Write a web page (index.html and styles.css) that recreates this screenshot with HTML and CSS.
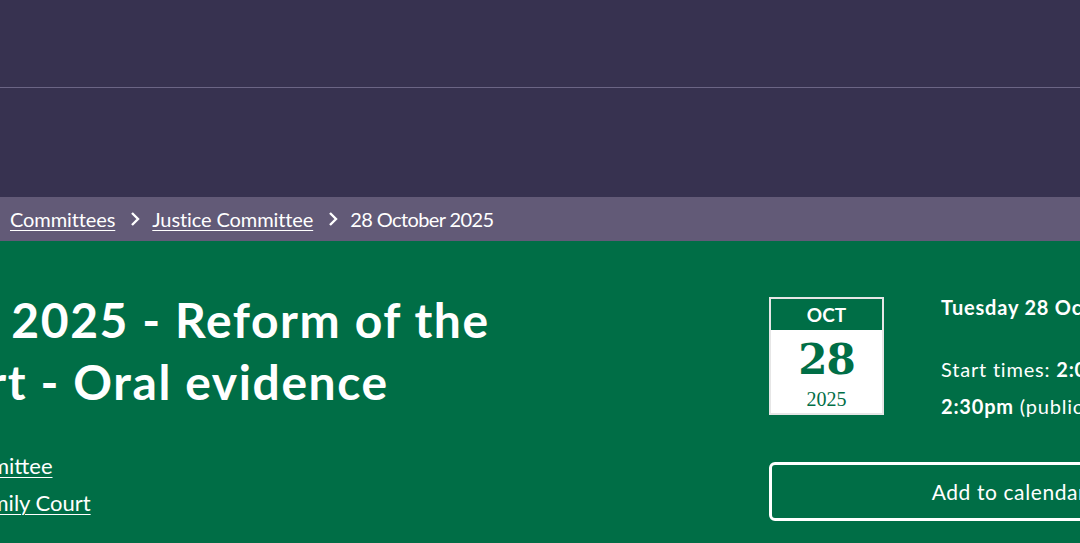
FILE: index.html
```html
<!DOCTYPE html>
<html lang="en">
<head>
<meta charset="utf-8">
<title>Justice Committee 28 October 2025</title>
<link rel="stylesheet" href="styles.css">
</head>
<body>
<header class="masthead">
  <div class="masthead-top"></div>
  <div class="masthead-nav"></div>
</header>
<nav class="breadcrumb" aria-label="Breadcrumb">
  <ol class="crumbs">
    <li class="crumb"><a href="#">Committees</a></li>
    <li class="crumb"><svg class="chev" viewBox="0 0 12 16" width="12" height="16"><path d="M3 2l6 6-6 6" fill="none" stroke="#fff" stroke-width="2.4"/></svg><a href="#">Justice Committee</a></li>
    <li class="crumb"><svg class="chev" viewBox="0 0 12 16" width="12" height="16"><path d="M3 2l6 6-6 6" fill="none" stroke="#fff" stroke-width="2.4"/></svg><span>28 October 2025</span></li>
  </ol>
</nav>
<main class="hero">
  <div class="hero-main">
    <h1 class="title">28 October 2025 - Reform of the<br>Family Court - Oral evidence</h1>
    <ul class="related">
      <li class="rel rel-one"><a href="#">Justice Committee</a></li>
      <li class="rel rel-two"><a href="#">Reform of the Family Court</a></li>
    </ul>
  </div>
  <aside class="hero-aside">
    <div class="when">
      <div class="cal">
        <div class="cal-month">OCT</div>
        <div class="cal-day">28</div>
        <div class="cal-year">2025</div>
      </div>
      <div class="details">
        <p class="date">Tuesday 28 October 2025</p>
        <p class="times">Start times: <strong>2:00pm</strong> (private),<br><strong>2:30pm</strong> (public)</p>
      </div>
    </div>
    <a class="cal-btn" href="#">Add to calendar</a>
  </aside>
</main>
</body>
</html>
```

FILE: styles.css
```css
* { box-sizing: border-box; }
html, body { margin: 0; padding: 0; }
body {
  font-family: Lato, "Noto Sans", sans-serif;
  background: #006e46;
  color: #fff;
  overflow: hidden;
  width: 1080px;
  height: 543px;
}
a { color: #fff; }

.masthead { background: #373250; }
.masthead-top { height: 88px; border-bottom: 1px solid #6b6585; }
.masthead-nav { height: 109px; }

.breadcrumb { background: #625a77; height: 44px; }
.crumbs {
  list-style: none;
  margin: 0;
  padding: 0 0 0 10px;
  display: flex;
  align-items: center;
  height: 44px;
  font-size: 20px;
  letter-spacing: -0.1px;
}
.crumb { display: flex; align-items: center; }
.crumb a { text-underline-offset: 3px; text-decoration-thickness: 1px; }
.crumb span { letter-spacing: -0.6px; }
.chev { margin: 0 11px 0 14px; }

.hero { display: flex; }
.hero-main {
  flex: 0 0 auto;
  width: 1031px;
  margin-left: -262px;
  padding-top: 48px;
}
.title {
  margin: 0;
  font-size: 48px;
  line-height: 62px;
  font-weight: 700;
  letter-spacing: 1.6px;
}
.related {
  list-style: none;
  margin: 34px 0 0;
  padding: 0;
  font-size: 22px;
  line-height: 37px;
}
.rel a { text-underline-offset: 3px; text-decoration-thickness: 1px; }
.rel-one { padding-left: 136px; }
.rel-two { padding-left: 92px; }

.hero-aside { padding-top: 56px; width: 400px; }
.when { display: flex; gap: 57px; }
.cal {
  width: 115px;
  height: 118px;
  border: 2px solid #e6e6e6;
  background: #fff;
  text-align: center;
  flex: 0 0 auto;
}
.cal-month {
  background: #006e46;
  font-size: 19px;
  font-weight: 700;
  line-height: 31px;
}
.cal-day {
  color: #006e46;
  font-family: "DejaVu Serif", serif;
  font-weight: 700;
  font-size: 42px;
  line-height: 60px;
  letter-spacing: -1px;
}
.cal-year {
  color: #006e46;
  font-family: "Liberation Serif", serif;
  font-size: 20px;
  line-height: 18px;
}
.details { white-space: nowrap; font-size: 20px; letter-spacing: 0.8px; margin-top: -5px; }
.date { margin: 0; font-weight: 700; line-height: 30px; }
.times { margin: 29px 0 0; line-height: 37px; }

.cal-btn {
  display: block;
  margin-top: 37px;
  width: 480px;
  height: 59px;
  border: 3px solid #fff;
  border-radius: 6px;
  text-align: center;
  line-height: 53px;
  font-size: 21px;
  letter-spacing: 0.6px;
  text-decoration: none;
}
```
